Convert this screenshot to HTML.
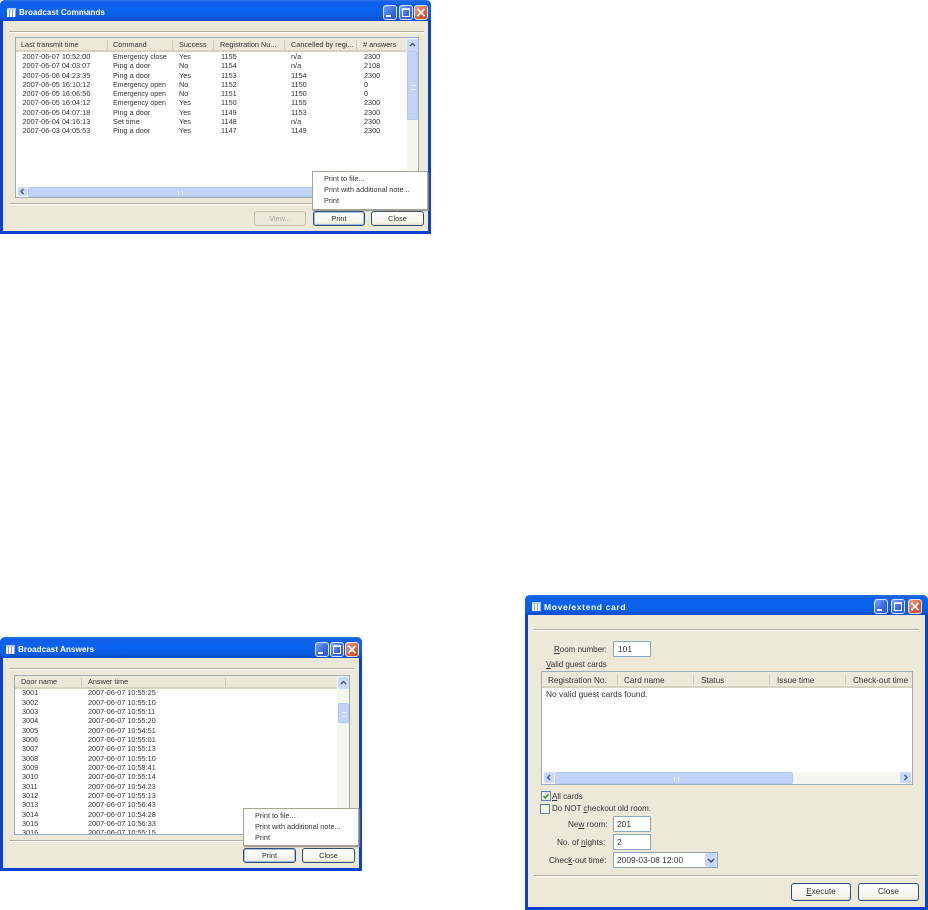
<!DOCTYPE html>
<html><head><meta charset="utf-8"><title>Broadcast windows</title>
<style>
html,body{margin:0;padding:0;background:#fff;width:928px;height:910px;overflow:hidden}
body{position:relative;font-family:"Liberation Sans",sans-serif;color:#222}
#all{position:absolute;left:0;top:0;width:928px;height:910px;filter:blur(.35px)}
.a,.t{position:absolute}
.t{white-space:nowrap;line-height:10px;height:10px;font-size:7.3px;color:#333}
.e{font-size:7px;margin-top:1px}
.win{position:absolute;background:#ece9d8;box-sizing:border-box;border:3px solid #0a3fd0;border-top:0;border-radius:5px 5px 0 0}
.tb{position:absolute;left:-3px;right:-3px;top:0;background:linear-gradient(#2a72e8 0,#0f5fe8 12%,#0a63ee 50%,#0a5ae0 85%,#0a48c4 100%);border-radius:5px 5px 0 0}
.ttl{position:absolute;color:#fff;font-weight:bold;white-space:nowrap}
.ico{position:absolute;width:9px;height:9px;background:repeating-linear-gradient(90deg,#fff 0 2px,#88a6e0 2px 3px);border-top:2px solid #b8ccf4;box-sizing:border-box}
.wb{position:absolute;top:5px;width:14px;height:15px;box-sizing:border-box;border:1px solid #d8e4f8;border-radius:3px;background:linear-gradient(135deg,#7ea3f0,#3a68e0 60%,#2f5ad8)}
.wb.x{background:linear-gradient(135deg,#eda488,#d9562e 70%)}
.wb svg{position:absolute;left:0;top:0}
.hl{position:absolute;height:1px;background:#b4b09f;border-bottom:1px solid #fff}
.list{position:absolute;background:#fff;border:1px solid #9aaebc;box-sizing:border-box}
.hdr{position:absolute;background:#ece9d8;border-bottom:2px solid #d6d2c2;box-sizing:border-box}
.sep{position:absolute;width:1px;background:#cfcbbb}
.sb{position:absolute;background:#f6f6f0}
.th{position:absolute;background:#c3d4fb;border:1px solid #b4c8f4;box-sizing:border-box;border-radius:2px}
.gv{position:absolute;left:3px;top:50%;width:5px;height:3px;margin-top:-1px;border-top:1px solid #eef3ff;border-bottom:1px solid #eef3ff}
.gh{position:absolute;top:3px;left:50%;width:3px;height:4px;border-left:1px solid #eef3ff;border-right:1px solid #eef3ff}
.ar{position:absolute;background:#c8d8f8;border-radius:2px}
.ar svg{position:absolute;left:0;top:0}
.btn{position:absolute;box-sizing:border-box;background:linear-gradient(#fff,#f4f2e8 85%,#dcd8c8);border:1px solid #2f4f78;border-radius:3px;text-align:center;color:#333}
.btn.d{border-color:#c4c1ae;color:#aaa79a;background:#ece9d8}
.btn.f{box-shadow:inset 0 0 0 1px #9dbcec}
.menu{position:absolute;background:#fff;border:1px solid #a8a698;box-sizing:border-box;box-shadow:1px 1px 1px #8f8d82}
.inp{position:absolute;box-sizing:border-box;background:#fff;border:1px solid #8ca6ba}
u{text-decoration:underline}
</style></head><body><div id="all">

<!-- Broadcast Commands -->
<div class="win" style="left:0;top:0;width:431px;height:234px">
<div class="tb" style="height:21px"></div>
<div class="ico" style="left:4px;top:8px"></div>
<div class="ttl" style="left:16px;top:8px;font-size:8.1px;line-height:10px">Broadcast Commands</div>
<div class="wb" style="left:380px"><svg width="12" height="13"><rect x="2" y="9" width="5" height="2" fill="#fff"/></svg></div>
<div class="wb" style="left:396px"><svg width="12" height="13"><path d="M2.5 3.5h7v7h-7z" fill="none" stroke="#fff"/><path d="M2 3h8" stroke="#fff" stroke-width="1.5"/></svg></div>
<div class="wb x" style="left:411px"><svg width="12" height="13"><path d="M2.5 3l7 7M9.5 3l-7 7" stroke="#fff" stroke-width="1.8"/></svg></div>
</div>
<div class="hl" style="left:9px;top:31px;width:415px"></div>
<div class="list" style="left:15px;top:37px;width:404px;height:161px">
<div class="hdr" style="left:0;top:0;width:391px;height:14px"></div>
<div class="sep" style="left:91px;top:2px;height:10px"></div>
<div class="sep" style="left:156px;top:2px;height:10px"></div>
<div class="sep" style="left:197px;top:2px;height:10px"></div>
<div class="sep" style="left:268px;top:2px;height:10px"></div>
<div class="sep" style="left:340px;top:2px;height:10px"></div>
<div class="sb" style="left:391px;top:0;width:11px;height:148px"></div>
<div class="ar" style="left:391px;top:1px;width:11px;height:12px"><svg width="11" height="12"><path d="M3 7l2.5-2.5L8 7" fill="none" stroke="#3a5288" stroke-width="1.3"/></svg></div>
<div class="th" style="left:391px;top:13px;width:11px;height:69px"><div class="gv"></div></div>
<div class="sb" style="left:1px;top:149px;width:390px;height:10px"></div>
<div class="ar" style="left:2px;top:149px;width:9px;height:9px"><svg width="9" height="9"><path d="M5.5 2L3 4.5 5.5 7" fill="none" stroke="#3a5288" stroke-width="1.3"/></svg></div>
<div class="th" style="left:12px;top:149px;width:300px;height:10px"><div class="gh"></div></div>
</div>
<div class="t" style="left:21px;top:40px">Last transmit time</div>
<div class="t" style="left:113px;top:40px">Command</div>
<div class="t" style="left:179px;top:40px">Success</div>
<div class="t" style="left:220px;top:40px">Registration Nu...</div>
<div class="t" style="left:291px;top:40px">Cancelled by regi...</div>
<div class="t" style="left:363px;top:40px"># answers</div>

<div class="t" style="left:22.5px;top:52px">2007-06-07 10:52:00</div><div class="t e" style="left:113px;top:52px">Emergency close</div><div class="t" style="left:179px;top:52px">Yes</div><div class="t" style="left:221px;top:52px">1155</div><div class="t" style="left:291px;top:52px">n/a</div><div class="t" style="left:364px;top:52px">2300</div>
<div class="t" style="left:22.5px;top:61px">2007-06-07 04:03:07</div><div class="t" style="left:113px;top:61px">Ping a door</div><div class="t" style="left:179px;top:61px">No</div><div class="t" style="left:221px;top:61px">1154</div><div class="t" style="left:291px;top:61px">n/a</div><div class="t" style="left:364px;top:61px">2108</div>
<div class="t" style="left:22.5px;top:71px">2007-06-06 04:23:35</div><div class="t" style="left:113px;top:71px">Ping a door</div><div class="t" style="left:179px;top:71px">Yes</div><div class="t" style="left:221px;top:71px">1153</div><div class="t" style="left:291px;top:71px">1154</div><div class="t" style="left:364px;top:71px">2300</div>
<div class="t" style="left:22.5px;top:80px">2007-06-05 16:10:12</div><div class="t e" style="left:113px;top:80px">Emergency open</div><div class="t" style="left:179px;top:80px">No</div><div class="t" style="left:221px;top:80px">1152</div><div class="t" style="left:291px;top:80px">1150</div><div class="t" style="left:364px;top:80px">0</div>
<div class="t" style="left:22.5px;top:89px">2007-06-05 16:06:56</div><div class="t e" style="left:113px;top:89px">Emergency open</div><div class="t" style="left:179px;top:89px">No</div><div class="t" style="left:221px;top:89px">1151</div><div class="t" style="left:291px;top:89px">1150</div><div class="t" style="left:364px;top:89px">0</div>
<div class="t" style="left:22.5px;top:98px">2007-06-05 16:04:12</div><div class="t e" style="left:113px;top:98px">Emergency open</div><div class="t" style="left:179px;top:98px">Yes</div><div class="t" style="left:221px;top:98px">1150</div><div class="t" style="left:291px;top:98px">1155</div><div class="t" style="left:364px;top:98px">2300</div>
<div class="t" style="left:22.5px;top:108px">2007-06-05 04:07:18</div><div class="t" style="left:113px;top:108px">Ping a door</div><div class="t" style="left:179px;top:108px">Yes</div><div class="t" style="left:221px;top:108px">1149</div><div class="t" style="left:291px;top:108px">1153</div><div class="t" style="left:364px;top:108px">2300</div>
<div class="t" style="left:22.5px;top:117px">2007-06-04 04:16:13</div><div class="t" style="left:113px;top:117px">Set time</div><div class="t" style="left:179px;top:117px">Yes</div><div class="t" style="left:221px;top:117px">1148</div><div class="t" style="left:291px;top:117px">n/a</div><div class="t" style="left:364px;top:117px">2300</div>
<div class="t" style="left:22.5px;top:126px">2007-06-03 04:05:53</div><div class="t" style="left:113px;top:126px">Ping a door</div><div class="t" style="left:179px;top:126px">Yes</div><div class="t" style="left:221px;top:126px">1147</div><div class="t" style="left:291px;top:126px">1149</div><div class="t" style="left:364px;top:126px">2300</div>

<div class="hl" style="left:9px;top:203px;width:415px"></div>
<div class="btn d t" style="left:254px;top:211px;width:52px;height:15px;line-height:13px">View...</div>
<div class="btn f t" style="left:313px;top:211px;width:52px;height:15px;line-height:13px">Print</div>
<div class="btn t" style="left:371px;top:211px;width:53px;height:15px;line-height:13px">Close</div>
<div class="menu" style="left:312px;top:171px;width:116px;height:39px"></div>
<div class="t" style="left:324px;top:174px">Print to file...</div>
<div class="t" style="left:324px;top:185px">Print with additional note...</div>
<div class="t" style="left:324px;top:196px">Print</div>

<!-- Broadcast Answers -->
<div class="win" style="left:0;top:637px;width:362px;height:234px">
<div class="tb" style="height:21px"></div>
<div class="ico" style="left:3px;top:8px"></div>
<div class="ttl" style="left:15px;top:8px;font-size:8.2px;line-height:10px">Broadcast Answers</div>
<div class="wb" style="left:312px"><svg width="12" height="13"><rect x="2" y="9" width="5" height="2" fill="#fff"/></svg></div>
<div class="wb" style="left:327px"><svg width="12" height="13"><path d="M2.5 3.5h7v7h-7z" fill="none" stroke="#fff"/><path d="M2 3h8" stroke="#fff" stroke-width="1.5"/></svg></div>
<div class="wb x" style="left:342px"><svg width="12" height="13"><path d="M2.5 3l7 7M9.5 3l-7 7" stroke="#fff" stroke-width="1.8"/></svg></div>
</div>
<div class="hl" style="left:9px;top:668px;width:345px"></div>
<div class="list" style="left:14px;top:675px;width:336px;height:160px;overflow:hidden">
<div class="hdr" style="left:0;top:0;width:322px;height:13px"></div>
<div class="sep" style="left:66px;top:2px;height:9px"></div>
<div class="sep" style="left:210px;top:2px;height:9px"></div>
<div class="sb" style="left:322px;top:0;width:12px;height:158px"></div>
<div class="ar" style="left:323px;top:1px;width:11px;height:12px"><svg width="11" height="12"><path d="M3 7l2.5-2.5L8 7" fill="none" stroke="#3a5288" stroke-width="1.3"/></svg></div>
<div class="th" style="left:323px;top:27px;width:11px;height:20px"><div class="gv"></div></div>
<div class="t" style="left:7px;top:152px">3016</div><div class="t" style="left:73px;top:152px">2007-06-07 10:55:15</div>
</div>
<div class="t" style="left:21px;top:677px">Door name</div><div class="t" style="left:88px;top:677px">Answer time</div>
<div class="t" style="left:22px;top:688px">3001</div><div class="t" style="left:88px;top:688px">2007-06-07 10:55:25</div>
<div class="t" style="left:22px;top:698px">3002</div><div class="t" style="left:88px;top:698px">2007-06-07 10:55:10</div>
<div class="t" style="left:22px;top:707px">3003</div><div class="t" style="left:88px;top:707px">2007-06-07 10:55:11</div>
<div class="t" style="left:22px;top:716px">3004</div><div class="t" style="left:88px;top:716px">2007-06-07 10:55:20</div>
<div class="t" style="left:22px;top:726px">3005</div><div class="t" style="left:88px;top:726px">2007-06-07 10:54:51</div>
<div class="t" style="left:22px;top:735px">3006</div><div class="t" style="left:88px;top:735px">2007-06-07 10:55:01</div>
<div class="t" style="left:22px;top:744px">3007</div><div class="t" style="left:88px;top:744px">2007-06-07 10:55:13</div>
<div class="t" style="left:22px;top:754px">3008</div><div class="t" style="left:88px;top:754px">2007-06-07 10:55:10</div>
<div class="t" style="left:22px;top:763px">3009</div><div class="t" style="left:88px;top:763px">2007-06-07 10:58:41</div>
<div class="t" style="left:22px;top:772px">3010</div><div class="t" style="left:88px;top:772px">2007-06-07 10:55:14</div>
<div class="t" style="left:22px;top:782px">3011</div><div class="t" style="left:88px;top:782px">2007-06-07 10:54:23</div>
<div class="t" style="left:22px;top:791px">3012</div><div class="t" style="left:88px;top:791px">2007-06-07 10:55:13</div>
<div class="t" style="left:22px;top:800px">3013</div><div class="t" style="left:88px;top:800px">2007-06-07 10:56:43</div>
<div class="t" style="left:22px;top:810px">3014</div><div class="t" style="left:88px;top:810px">2007-06-07 10:54:28</div>
<div class="t" style="left:22px;top:819px">3015</div><div class="t" style="left:88px;top:819px">2007-06-07 10:56:33</div>
<div class="hl" style="left:9px;top:840px;width:345px"></div>
<div class="btn f t" style="left:243px;top:848px;width:53px;height:15px;line-height:13px">Print</div>
<div class="btn t" style="left:302px;top:848px;width:53px;height:15px;line-height:13px">Close</div>
<div class="menu" style="left:243px;top:808px;width:116px;height:38px"></div>
<div class="t" style="left:255px;top:811px">Print to file...</div>
<div class="t" style="left:255px;top:822px">Print with additional note...</div>
<div class="t" style="left:255px;top:833px">Print</div>

<!-- Move/extend card -->
<div class="win" style="left:525px;top:595px;width:403px;height:315px">
<div class="tb" style="height:20px"></div>
<div class="ico" style="left:4px;top:7px"></div>
<div class="ttl" style="left:16px;top:7px;font-size:8.6px;line-height:10px;letter-spacing:.6px">Move/extend card</div>
<div class="wb" style="left:346px;top:4px"><svg width="12" height="13"><rect x="2" y="9" width="5" height="2" fill="#fff"/></svg></div>
<div class="wb" style="left:363px;top:4px"><svg width="12" height="13"><path d="M2.5 3.5h7v7h-7z" fill="none" stroke="#fff"/><path d="M2 3h8" stroke="#fff" stroke-width="1.5"/></svg></div>
<div class="wb x" style="left:380px;top:4px"><svg width="12" height="13"><path d="M2.5 3l7 7M9.5 3l-7 7" stroke="#fff" stroke-width="1.8"/></svg></div>
</div>
<div class="hl" style="left:534px;top:629px;width:385px"></div>
<div class="t" style="left:554px;top:645px;font-size:8px"><u>R</u>oom number:</div>
<div class="inp" style="left:613px;top:641px;width:38px;height:16px"></div>
<div class="t" style="left:618px;top:644px;font-size:8.4px">101</div>
<div class="t" style="left:546px;top:660px;font-size:8px"><u>V</u>alid guest cards</div>
<div class="list" style="left:541px;top:671px;width:372px;height:114px">
<div class="hdr" style="left:0;top:0;width:370px;height:16px"></div>
<div class="sep" style="left:75px;top:3px;height:10px"></div>
<div class="sep" style="left:151px;top:3px;height:10px"></div>
<div class="sep" style="left:227px;top:3px;height:10px"></div>
<div class="sep" style="left:303px;top:3px;height:10px"></div>
<div class="sb" style="left:0;top:100px;width:370px;height:12px"></div>
<div class="ar" style="left:2px;top:100px;width:10px;height:11px"><svg width="10" height="11"><path d="M6 3L3.5 5.5 6 8" fill="none" stroke="#3a5288" stroke-width="1.3"/></svg></div>
<div class="th" style="left:13px;top:100px;width:238px;height:12px"><div class="gh" style="top:4px"></div></div>
<div class="ar" style="left:358px;top:100px;width:11px;height:11px"><svg width="11" height="11"><path d="M4.5 3L7 5.5 4.5 8" fill="none" stroke="#3a5288" stroke-width="1.3"/></svg></div>
</div>
<div class="t" style="left:548px;top:676px;font-size:8.2px">Registration No.</div>
<div class="t" style="left:624px;top:676px;font-size:8.2px">Card name</div>
<div class="t" style="left:701px;top:676px;font-size:8.2px">Status</div>
<div class="t" style="left:777px;top:676px;font-size:8.2px">Issue time</div>
<div class="t" style="left:853px;top:676px;font-size:8.2px">Check-out time</div>
<div class="t" style="left:546px;top:689px;font-size:8.4px">No valid guest cards found.</div>

<div class="inp" style="left:541px;top:791px;width:10px;height:10px;background:#f0efe6;border-color:#5a82a8"><svg class="a" style="left:0;top:0" width="8" height="8"><path d="M1.5 4l2 2L6.5 2" fill="none" stroke="#2fa82f" stroke-width="1.6"/></svg></div>
<div class="t" style="left:552px;top:792px;font-size:8px"><u>A</u>ll cards</div>
<div class="inp" style="left:540px;top:804px;width:10px;height:10px;border-color:#5a82a8;background:#f4f3ea"></div>
<div class="t" style="left:552px;top:804px;font-size:8px">Do NOT <u>c</u>heckout old room.</div>
<div class="t" style="left:568px;top:820px;font-size:8.2px">Ne<u>w</u> room:</div>
<div class="inp" style="left:613px;top:816px;width:38px;height:16px"></div>
<div class="t" style="left:617px;top:819px;font-size:8.4px">201</div>
<div class="t" style="left:557px;top:838px;font-size:8.2px">No. of <u>n</u>ights:</div>
<div class="inp" style="left:613px;top:834px;width:38px;height:16px"></div>
<div class="t" style="left:617px;top:837px;font-size:8.4px">2</div>
<div class="t" style="left:549px;top:856px;font-size:8.2px">Chec<u>k</u>-out time:</div>
<div class="inp" style="left:613px;top:852px;width:105px;height:16px"></div>
<div class="t" style="left:617px;top:855px;font-size:8.4px">2009-03-08 12:00</div>
<div class="ar" style="left:705px;top:853px;width:12px;height:14px"><svg width="12" height="14"><path d="M3 6l3 3 3-3" fill="none" stroke="#3a5288" stroke-width="1.5"/></svg></div>
<div class="hl" style="left:534px;top:875px;width:385px"></div>
<div class="btn t" style="left:791px;top:883px;width:60px;height:18px;line-height:16px;font-size:8.2px"><u>E</u>xecute</div>
<div class="btn t" style="left:858px;top:883px;width:61px;height:18px;line-height:16px;font-size:8.2px">Close</div>
</div></body></html>
